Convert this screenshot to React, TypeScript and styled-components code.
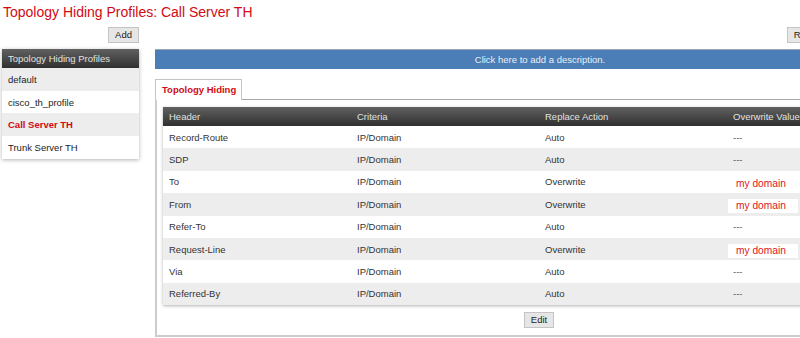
import styled, { createGlobalStyle } from 'styled-components';

const GlobalStyle = createGlobalStyle`
  html, body {
    margin: 0;
    padding: 0;
    background: #ffffff;
    overflow: hidden;
  }
  body {
    font-family: "Liberation Sans", Arial, sans-serif;
    color: #333333;
  }
`;

const profiles = ['default', 'cisco_th_profile', 'Call Server TH', 'Trunk Server TH'];
const selected = 'Call Server TH';

const rows = [
  { header: 'Record-Route', criteria: 'IP/Domain', action: 'Auto', value: '' },
  { header: 'SDP', criteria: 'IP/Domain', action: 'Auto', value: '' },
  { header: 'To', criteria: 'IP/Domain', action: 'Overwrite', value: 'my domain' },
  { header: 'From', criteria: 'IP/Domain', action: 'Overwrite', value: 'my domain' },
  { header: 'Refer-To', criteria: 'IP/Domain', action: 'Auto', value: '' },
  { header: 'Request-Line', criteria: 'IP/Domain', action: 'Overwrite', value: 'my domain' },
  { header: 'Via', criteria: 'IP/Domain', action: 'Auto', value: '' },
  { header: 'Referred-By', criteria: 'IP/Domain', action: 'Auto', value: '' },
];

const App = () => {
  return (
    <Page>
      <GlobalStyle />
      <Title>Topology Hiding Profiles: Call Server TH</Title>
      <Columns>
        <LeftColumn>
          <Toolbar>
            <Button>Add</Button>
          </Toolbar>
          <ProfileList>
            <ListHeader>Topology Hiding Profiles</ListHeader>
            {profiles.map((p, i) => (
              <ListItem key={p} $alt={i % 2 === 0} $active={p === selected}>
                {p}
              </ListItem>
            ))}
          </ProfileList>
        </LeftColumn>
        <RightColumn>
          <Toolbar>
            <Button>Rename</Button>
            <Button>Clone</Button>
            <Button>Delete</Button>
          </Toolbar>
          <DescriptionBar>Click here to add a description.</DescriptionBar>
          <Tabs>
            <Tab>Topology Hiding</Tab>
          </Tabs>
          <TabPanel>
            <Table>
              <thead>
                <tr>
                  <HeadCell>Header</HeadCell>
                  <HeadCell>Criteria</HeadCell>
                  <HeadCell>Replace Action</HeadCell>
                  <HeadCell>Overwrite Value</HeadCell>
                </tr>
              </thead>
              <tbody>
                {rows.map((r, i) => (
                  <Row key={r.header} $alt={i % 2 === 1}>
                    <Cell>{r.header}</Cell>
                    <Cell>{r.criteria}</Cell>
                    <Cell>{r.action}</Cell>
                    {r.value ? (
                      <Cell $value>
                        <ValueBox>{r.value}</ValueBox>
                      </Cell>
                    ) : (
                      <Cell>
                        <Dash>---</Dash>
                      </Cell>
                    )}
                  </Row>
                ))}
              </tbody>
            </Table>
            <PanelFooter>
              <Button>Edit</Button>
            </PanelFooter>
          </TabPanel>
        </RightColumn>
      </Columns>
    </Page>
  );
};

const Page = styled.div`
  width: 1000px;
`;

const Title = styled.h1`
  margin: 0;
  padding-left: 3px;
  height: 24px;
  line-height: 24px;
  font-size: 14px;
  font-weight: normal;
  color: #d10a14;
`;

const Columns = styled.div`
  display: flex;
  align-items: flex-start;
  margin-top: 3px;
`;

const LeftColumn = styled.div`
  width: 137px;
  margin-left: 2px;
`;

const RightColumn = styled.div`
  width: 770px;
  margin-left: 16px;
`;

const Toolbar = styled.div`
  display: flex;
  justify-content: flex-end;
  gap: 4px;
  height: 17px;
  margin-bottom: 5px;
`;

const Button = styled.button`
  height: 16px;
  padding: 0 6px;
  background: #e6e6e6;
  border: 1px solid #c4c4c4;
  border-radius: 0;
  font-family: "Liberation Sans", Arial, sans-serif;
  font-size: 9.5px;
  color: #222222;
  line-height: 14px;
  cursor: pointer;
  &:hover {
    background: #d8d8d8;
  }
`;

const ProfileList = styled.div`
  background: #ffffff;
  box-shadow: 0 1px 4px rgba(0, 0, 0, 0.3);
`;

const ListHeader = styled.div`
  height: 19px;
  line-height: 19px;
  padding-left: 6px;
  font-size: 9.5px;
  color: #e2e2e2;
  background: linear-gradient(#616161, #303030);
`;

const ListItem = styled.div<{ $alt: boolean; $active: boolean }>`
  height: 22.7px;
  line-height: 24px;
  padding-left: 6px;
  font-size: 9.5px;
  background: ${(p) => (p.$alt ? '#ededed' : '#ffffff')};
  color: ${(p) => (p.$active ? '#d10a14' : '#222222')};
  font-weight: ${(p) => (p.$active ? 'bold' : 'normal')};
`;

const DescriptionBar = styled.div`
  height: 19px;
  line-height: 19px;
  border-top: 1px solid #9aa6b4;
  background: #4b7eb7;
  color: #e9eef5;
  font-size: 9.5px;
  text-align: center;
`;

const Tabs = styled.div`
  display: flex;
  margin-top: 10px;
`;

const Tab = styled.div`
  width: 79px;
  height: 20px;
  line-height: 20px;
  padding-left: 6px;
  background: #ffffff;
  border: 1px solid #c4c4c4;
  border-bottom: none;
  color: #d10a14;
  font-weight: bold;
  font-size: 9.5px;
  margin-bottom: -1px;
  position: relative;
`;

const TabPanel = styled.div`
  border-top: 1px solid #a8a8a8;
  border-left: 2px solid #cccccc;
  border-bottom: 2px solid #cccccc;
  padding: 7px 0 0 6px;
`;

const Table = styled.table`
  width: 752px;
  border-collapse: collapse;
  table-layout: fixed;
  box-shadow: 0 1px 3px rgba(0, 0, 0, 0.3);
`;

const HeadCell = styled.th`
  height: 19px;
  padding: 0 6px;
  text-align: left;
  font-weight: normal;
  font-size: 9.5px;
  color: #e2e2e2;
  background: linear-gradient(#616161, #303030);
`;

const Row = styled.tr<{ $alt: boolean }>`
  height: 22.4px;
  background: ${(p) => (p.$alt ? '#ededed' : '#ffffff')};
`;

const Cell = styled.td<{ $value?: boolean }>`
  padding: ${(p) => (p.$value ? '4px 6px 0' : '0 6px')};
  font-size: 9.5px;
  color: #333333;
  vertical-align: middle;
`;

const ValueBox = styled.span`
  display: inline-block;
  width: 62px;
  height: 14px;
  line-height: 14px;
  margin-left: -5px;
  padding-left: 8px;
  background: #ffffff;
  color: #e0141e;
  font-size: 10.2px;
`;

const Dash = styled.span`
  color: #555555;
`;

const PanelFooter = styled.div`
  width: 752px;
  display: flex;
  justify-content: center;
  padding: 7px 0 7px;
`;

export default App;
